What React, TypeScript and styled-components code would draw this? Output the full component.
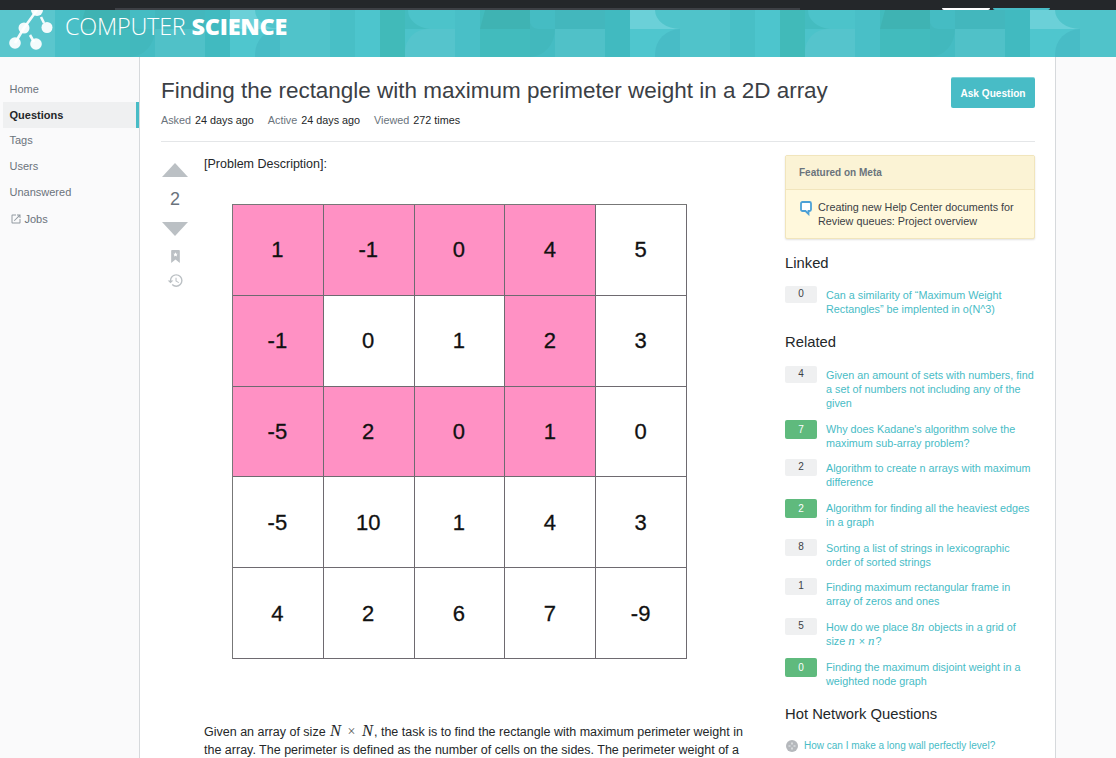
import React from 'react';
import styled, { createGlobalStyle } from 'styled-components';
import { MdOpenInNew, MdHistory } from 'react-icons/md';

const GlobalStyle = createGlobalStyle`
  html, body {
    margin: 0;
    padding: 0;
    height: 758px;
    overflow: hidden;
    background: #fff;
    font-family: "Liberation Sans", Arial, sans-serif;
    color: #3b4045;
  }
  * {
    box-sizing: border-box;
  }
`;

const TopBar = styled.div`
  display: flex;
  align-items: flex-end;
  height: 10px;
  padding-left: 115px;
  background: #24272a;
`;

const SearchStub = styled.div`
  width: 685px;
  height: 2px;
  background: #3d4045;
`;

const TopButton = styled.div<{ $primary?: boolean }>`
  width: ${(p) => (p.$primary ? '57px' : '48px')};
  height: 2px;
  margin-left: ${(p) => (p.$primary ? '3px' : '142px')};
  border-radius: 0 0 2px 2px;
  background: ${(p) => (p.$primary ? '#48bcc6' : '#ffffff')};
`;

const Banner = styled.header`
  position: relative;
  display: flex;
  align-items: center;
  height: 47px;
  background: #4dc3ca;
  overflow: hidden;
`;

const BannerArt = styled.svg`
  position: absolute;
  inset: 0;
`;

const Logo = styled.svg`
  position: relative;
  flex: none;
  width: 48px;
  height: 47px;
  margin-left: 7px;
`;

const Brand = styled.div`
  position: relative;
  margin: 0 0 0 10px;
  padding-bottom: 15px;
  font-family: "Open Sans", "Liberation Sans", sans-serif;
  font-size: 23.4px;
  font-weight: 300;
  letter-spacing: -0.2px;
  color: #fff;
  strong {
    font-weight: 800;
  }
`;

const Page = styled.div`
  display: flex;
  height: 701px;
`;

const SideNav = styled.nav`
  flex: none;
  width: 140px;
  padding: 19px 0 0 3px;
  background: #fafafb;
  border-right: 1px solid #d6d9dc;
`;

const NavItem = styled.div<{ $active?: boolean; $external?: boolean }>`
  display: flex;
  align-items: center;
  gap: 3px;
  height: ${(p) => (p.$active ? '26px' : '25.6px')};
  margin-top: ${(p) => (p.$external ? '2px' : '0')};
  padding-left: 6.5px;
  font-size: 11px;
  color: ${(p) => (p.$active ? '#242729' : '#6a737c')};
  font-weight: ${(p) => (p.$active ? 700 : 400)};
  background: ${(p) => (p.$active ? '#eff0f1' : 'transparent')};
  border-right: ${(p) => (p.$active ? '3px solid #48bcc6' : 'none')};
`;

const Main = styled.main`
  flex: none;
  width: 915px;
  padding: 19px 20px 0 21px;
  overflow: hidden;
`;

const Gutter = styled.div`
  flex: 1;
  background: #fafafb;
  border-left: 1px solid #d6d9dc;
`;

const TitleRow = styled.div`
  display: flex;
  justify-content: space-between;
  align-items: flex-start;
`;

const Title = styled.h1`
  margin: 0;
  font-size: 22.47px;
  line-height: 30px;
  font-weight: 400;
  color: #3b4045;
`;

const AskButton = styled.div`
  display: flex;
  align-items: center;
  justify-content: center;
  width: 84px;
  height: 31px;
  margin-top: 1px;
  border-radius: 2px;
  border-top: 1px solid #7fd2d9;
  background: #48bcc6;
  color: #fff;
  font-size: 10.1px;
  font-weight: 700;
`;

const Stats = styled.div`
  display: flex;
  gap: 14px;
  height: 34px;
  padding-top: 6px;
  border-bottom: 1px solid #e4e6e8;
  font-size: 10.8px;
  color: #6a737c;
  b {
    margin-left: 4px;
    font-weight: 400;
    color: #242729;
  }
`;

const Columns = styled.div`
  display: flex;
  padding-top: 13px;
`;

const VoteCell = styled.div`
  flex: none;
  width: 43px;
`;

const VoteStack = styled.div`
  width: 28px;
  display: flex;
  flex-direction: column;
  align-items: center;
`;

const Arrow = styled.div<{ $down?: boolean }>`
  width: 0;
  height: 0;
  margin-top: ${(p) => (p.$down ? '0' : '8px')};
  border-left: 13.5px solid transparent;
  border-right: 13.5px solid transparent;
  ${(p) => (p.$down ? 'border-top' : 'border-bottom')}: 14px solid #bbc0c4;
`;

const VoteCount = styled.div`
  height: 45px;
  line-height: 45px;
  font-size: 18px;
  color: #6a737c;
`;

const Bookmark = styled.svg`
  margin-top: 14px;
  width: 9px;
  height: 13px;
`;

const HistoryIcon = styled(MdHistory)`
  margin-top: 9px;
  font-size: 17px;
  color: #bbc0c4;
`;

const PostBody = styled.div`
  flex: none;
  width: 581px;
  font-size: 12.5px;
  line-height: 18px;
  color: #242729;
`;

const PostText = styled.p`
  margin: 0;
  max-width: 552px;
  i {
    margin: 0 1px;
    font-family: "Liberation Serif", serif;
    font-size: 16.5px;
    line-height: 1;
  }
  span {
    margin: 0 2px;
    font-family: "Liberation Serif", serif;
    font-size: 14px;
    line-height: 1;
    color: #555;
  }
`;

const Matrix = styled.div`
  display: grid;
  grid-template-columns: repeat(5, 1fr);
  grid-auto-rows: 1fr;
  width: 455px;
  height: 455px;
  margin: 31px 0 64px 28px;
  border-top: 1px solid #777;
  border-left: 1px solid #777;
`;

const Cell = styled.div<{ $hot?: boolean }>`
  display: flex;
  align-items: center;
  justify-content: center;
  padding: 1px 1px 0 0;
  border-right: 1px solid #6e6a70;
  border-bottom: 1px solid #6e6a70;
  background: ${(p) => (p.$hot ? '#ff91c4' : '#fff')};
  font-size: 22px;
  color: #111;
  -webkit-text-stroke: 0.3px #111;
`;

const SideBar = styled.aside`
  flex: none;
  width: 250px;
`;

const MetaBox = styled.div`
  border: 1px solid #f1e5bc;
  border-radius: 2px;
  background: #fff8dc;
  box-shadow: 0 1px 2px rgba(0, 0, 0, 0.12);
`;

const MetaHead = styled.div`
  height: 34px;
  padding-left: 13px;
  line-height: 34px;
  font-size: 10px;
  font-weight: 700;
  color: #6a737c;
  background: #fbf3d5;
  border-bottom: 1px solid #f1e5bc;
`;

const MetaRow = styled.div`
  display: flex;
  gap: 6px;
  padding: 10px 13px 10px 14px;
  font-size: 10.8px;
  line-height: 14px;
  color: #3b4045;
`;

const MetaIcon = styled.svg`
  flex: none;
  width: 12px;
  height: 15px;
  margin-top: 1px;
`;

const SectionTitle = styled.h4<{ $top: number }>`
  margin: ${(p) => p.$top}px 0 0;
  font-size: 14.8px;
  line-height: 19px;
  font-weight: 400;
  color: #242729;
`;

const LinkList = styled.div<{ $top: number }>`
  display: flex;
  flex-direction: column;
  gap: 9.67px;
  margin-top: ${(p) => p.$top}px;
`;

const LinkRow = styled.div`
  display: flex;
  gap: 9px;
`;

const Score = styled.div<{ $accepted?: boolean }>`
  flex: none;
  width: 32px;
  height: ${(p) => (p.$accepted ? '19px' : '17px')};
  border-radius: 2px;
  text-align: center;
  font-size: 10px;
  line-height: ${(p) => (p.$accepted ? '19px' : '15px')};
  background: ${(p) => (p.$accepted ? '#5fba7d' : '#eff0f1')};
  color: ${(p) => (p.$accepted ? '#fff' : '#3b4045')};
`;

const LinkText = styled.div`
  padding-top: 2px;
  font-size: 10.8px;
  line-height: 14px;
  color: #48bcc6;
  i {
    margin: 0 1px 0 0;
    font-family: "Liberation Serif", serif;
    font-size: 13px;
  }
  em {
    font-family: "Liberation Serif", serif;
    font-style: normal;
    font-size: 13px;
  }
`;

const HotRow = styled.div`
  display: flex;
  align-items: center;
  gap: 6px;
  margin-top: 16px;
  padding-left: 1px;
  font-size: 10px;
  color: #48bcc6;
`;

const HotIcon = styled.svg`
  width: 12px;
  height: 12px;
`;

const tile: [string, string][] = [
  // columns, tile runs 400px and repeats
  ['M0 0H50V47H0Z', '#4fc6ce'],
  ['M0 0H50V19H0Z', '#50c4cb'],
  ['M0 0H25A25 19 0 0 0 50 19H0Z', '#6bd0d8'],
  ['M25 47V44A25 25 0 0 1 50 19V47Z', '#48bcc6'],
  ['M50 0H100V47H50Z', '#50c3ca'],
  ['M100 0H125V47H100Z', '#48bfc6'],
  ['M125 0H150V47H125Z', '#4dc5cd'],
  ['M150 0H175V47H150Z', '#41bab9'],
  ['M175 0H225V47H175Z', '#4cc3ca'],
  ['M175 47V42A23 23 0 0 1 198 19H225V47Z', '#55c4cc'],
  ['M175 0H178A25 19 0 0 0 200 19H175Z', '#44bcc0'],
  ['M225 0H250V47H225Z', '#49bfc7'],
  ['M250 0H300V47H250Z', '#42bbbd'],
  ['M255 0H300V19H250Z', '#3fb3b3'],
  ['M300 0H325V47H300Z', '#45bcc3'],
  ['M300 47A25 28 0 0 0 325 19H308A8 8 0 0 1 300 10Z', '#42b8bd'],
  ['M325 0H375V47H325Z', '#50c1c8'],
  ['M325 0H375V19H325Z', '#43b7bd'],
  ['M375 0H400V47H375Z', '#41bac0'],
];

const grid: [string, boolean][][] = [
  [['1', true], ['-1', true], ['0', true], ['4', true], ['5', false]],
  [['-1', true], ['0', false], ['1', false], ['2', true], ['3', false]],
  [['-5', true], ['2', true], ['0', true], ['1', true], ['0', false]],
  [['-5', false], ['10', false], ['1', false], ['4', false], ['3', false]],
  [['4', false], ['2', false], ['6', false], ['7', false], ['-9', false]],
];

const related: { score: number; accepted?: boolean; text: React.ReactNode }[] = [
  { score: 4, text: 'Given an amount of sets with numbers, find a set of numbers not including any of the given' },
  { score: 7, accepted: true, text: "Why does Kadane's algorithm solve the maximum sub-array problem?" },
  { score: 2, text: 'Algorithm to create n arrays with maximum difference' },
  { score: 2, accepted: true, text: 'Algorithm for finding all the heaviest edges in a graph' },
  { score: 8, text: 'Sorting a list of strings in lexicographic order of sorted strings' },
  { score: 1, text: 'Finding maximum rectangular frame in array of zeros and ones' },
  {
    score: 5,
    text: (
      <>
        How do we place <em>8</em>
        <i>n</i> objects in a grid of size <i>n</i> × <i>n</i>?
      </>
    ),
  },
  { score: 0, accepted: true, text: 'Finding the maximum disjoint weight in a weighted node graph' },
];

const navItems = ['Home', 'Questions', 'Tags', 'Users', 'Unanswered'];

const App: React.FC = () => (
  <>
    <GlobalStyle />
    <TopBar>
      <SearchStub />
      <TopButton />
      <TopButton $primary />
    </TopBar>
    <Banner>
      <BannerArt width="1116" height="47" viewBox="0 0 1116 47">
        <defs>
          <pattern id="tile" x="230" y="0" width="400" height="47" patternUnits="userSpaceOnUse">
            {tile.map(([d, fill]) => (
              <path key={d} d={d} fill={fill} />
            ))}
          </pattern>
        </defs>
        <rect width="1116" height="47" fill="url(#tile)" />
        <path d="M0 0H55V47H0Z" fill="#5ac6cd" />
      </BannerArt>
      <Logo viewBox="0 0 48 47">
        <g fill="#fff" fillOpacity="0.93">
          <circle cx="30" cy="0" r="6" />
          <circle cx="40" cy="17.500" r="5.500" />
          <circle cx="17" cy="18" r="5.500" />
          <circle cx="8" cy="33" r="5.800" />
          <circle cx="29" cy="34" r="5.800" />
        </g>
        <g stroke="#fff" strokeWidth="2.600" strokeOpacity="0.93">
          <path d="M17 18 30 0M17 18 8 33M23 25l4 7M34 7l3 6" />
        </g>
      </Logo>
      <Brand>
        COMPUTER <strong>SCIENCE</strong>
      </Brand>
    </Banner>
    <Page>
      <SideNav>
        {navItems.map((v) => (
          <NavItem key={v} $active={v === 'Questions'}>
            {v}
          </NavItem>
        ))}
        <NavItem $external>
          <MdOpenInNew size={12} color="#9199a1" />
          Jobs
        </NavItem>
      </SideNav>
      <Main>
        <TitleRow>
          <Title>Finding the rectangle with maximum perimeter weight in a 2D array</Title>
          <AskButton>Ask Question</AskButton>
        </TitleRow>
        <Stats>
          <span>
            Asked<b>24 days ago</b>
          </span>
          <span>
            Active<b>24 days ago</b>
          </span>
          <span>
            Viewed<b>272 times</b>
          </span>
        </Stats>
        <Columns>
          <VoteCell>
            <VoteStack>
              <Arrow />
              <VoteCount>2</VoteCount>
              <Arrow $down />
              <Bookmark viewBox="0 0 10 15">
                <path d="M1 0h8a1 1 0 0 1 1 1v14l-5-4-5 4V1a1 1 0 0 1 1-1z" fill="#bbc0c4" />
                <path d="M5 2.500l.8 1.700 1.800.2-1.300 1.200.4 1.800L5 6.500l-1.700.9.4-1.800-1.300-1.200 1.800-.2z" fill="#fff" />
              </Bookmark>
              <HistoryIcon />
            </VoteStack>
          </VoteCell>
          <PostBody>
            <PostText>[Problem Description]:</PostText>
            <Matrix>
              {grid.flat().map(([value, hot], i) => (
                <Cell key={i} $hot={hot}>
                  {value}
                </Cell>
              ))}
            </Matrix>
            <PostText>
              Given an array of size <i>N</i> <span>×</span> <i>N</i>, the task is to find the rectangle with maximum perimeter weight in the array. The perimeter is defined as the number of cells on the sides. The perimeter weight of a
            </PostText>
          </PostBody>
          <SideBar>
            <MetaBox>
              <MetaHead>Featured on Meta</MetaHead>
              <MetaRow>
                <MetaIcon viewBox="0 0 12 15">
                  <path d="M2.500 1h7A1.500 1.500 0 0 1 11 2.500v6A1.500 1.500 0 0 1 9.500 10H8.500v3l-3-3h-3A1.500 1.500 0 0 1 1 8.500v-6A1.500 1.500 0 0 1 2.500 1z" fill="#fff" stroke="#4ba0d6" strokeWidth="1.800" />
                </MetaIcon>
                <span>Creating new Help Center documents for Review queues: Project overview</span>
              </MetaRow>
            </MetaBox>
            <SectionTitle $top={15}>Linked</SectionTitle>
            <LinkList $top={13}>
              <LinkRow>
                <Score>0</Score>
                <LinkText>Can a similarity of “Maximum Weight Rectangles” be implented in o(N^3)</LinkText>
              </LinkRow>
            </LinkList>
            <SectionTitle $top={17}>Related</SectionTitle>
            <LinkList $top={14}>
              {related.map((r, i) => (
                <LinkRow key={i}>
                  <Score $accepted={r.accepted}>{r.score}</Score>
                  <LinkText>{r.text}</LinkText>
                </LinkRow>
              ))}
            </LinkList>
            <SectionTitle $top={17}>Hot Network Questions</SectionTitle>
            <HotRow>
              <HotIcon viewBox="0 0 12 12">
                <circle cx="6" cy="6" r="6" fill="#b5b8bc" />
                <path d="M6 2.500v2M6 7.500v2M2.500 6h2M7.500 6h2" stroke="#eef0f1" strokeWidth="1.200" />
              </HotIcon>
              How can I make a long wall perfectly level?
            </HotRow>
          </SideBar>
        </Columns>
      </Main>
      <Gutter />
    </Page>
  </>
);

export default App;
